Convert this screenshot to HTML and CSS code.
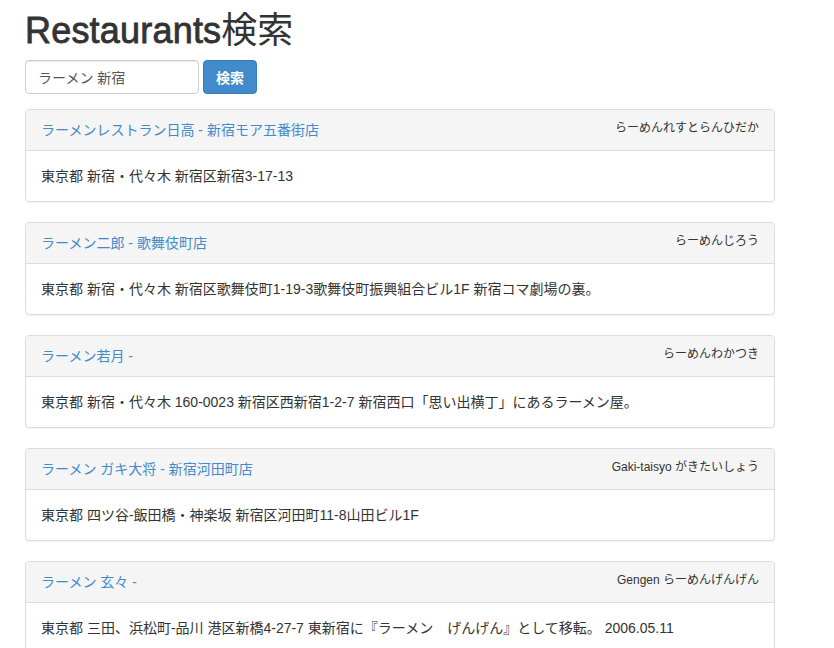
FILE: index.html
```html
<!DOCTYPE html>
<html lang="ja">
<head>
<meta charset="utf-8">
<title>Restaurants検索</title>
<link rel="stylesheet" href="styles.css">
</head>
<body>
<div class="container">
  <h1 class="title"><span class="title-latin">Restaurants</span>検索</h1>
  <form class="search">
    <input class="search-input" type="text" value="ラーメン 新宿">
    <button class="search-btn" type="button">検索</button>
  </form>

  <div class="panel">
    <div class="panel-heading">
      <a class="panel-title" href="#">ラーメンレストラン日高 - 新宿モア五番街店</a>
      <small class="kana">らーめんれすとらんひだか</small>
    </div>
    <div class="panel-body">東京都 新宿・代々木 新宿区新宿3-17-13</div>
  </div>

  <div class="panel">
    <div class="panel-heading">
      <a class="panel-title" href="#">ラーメン二郎 - 歌舞伎町店</a>
      <small class="kana">らーめんじろう</small>
    </div>
    <div class="panel-body">東京都 新宿・代々木 新宿区歌舞伎町1-19-3歌舞伎町振興組合ビル1F 新宿コマ劇場の裏。</div>
  </div>

  <div class="panel">
    <div class="panel-heading">
      <a class="panel-title" href="#">ラーメン若月 -</a>
      <small class="kana">らーめんわかつき</small>
    </div>
    <div class="panel-body">東京都 新宿・代々木 160-0023 新宿区西新宿1-2-7 新宿西口「思い出横丁」にあるラーメン屋。</div>
  </div>

  <div class="panel">
    <div class="panel-heading">
      <a class="panel-title" href="#">ラーメン ガキ大将 - 新宿河田町店</a>
      <small class="kana">Gaki-taisyo がきたいしょう</small>
    </div>
    <div class="panel-body">東京都 四ツ谷-飯田橋・神楽坂 新宿区河田町11-8山田ビル1F</div>
  </div>

  <div class="panel">
    <div class="panel-heading">
      <a class="panel-title" href="#">ラーメン 玄々 -</a>
      <small class="kana">Gengen らーめんげんげん</small>
    </div>
    <div class="panel-body">東京都 三田、浜松町-品川 港区新橋4-27-7 東新宿に『ラーメン　げんげん』として移転。 2006.05.11</div>
  </div>
</div>
</body>
</html>
```

FILE: styles.css
```css
* { box-sizing: border-box; }

body {
  margin: 0;
  background: #fff;
  color: #333;
  font-family: "Liberation Sans", "Noto Sans CJK JP", sans-serif;
  font-size: 14px;
  line-height: 20px;
}

.container {
  width: 750px;
  margin-left: 25px;
}

.title {
  margin: 11px 0 9px;
  font-size: 36px;
  line-height: 40px;
  font-weight: normal;
  color: #333;
}

.title-latin {
  letter-spacing: 0.2px;
  -webkit-text-stroke: 0.8px #333;
}

.search {
  display: flex;
  gap: 4px;
  margin: 0 0 15px;
}

.search-input {
  width: 174px;
  height: 34px;
  padding: 6px 12px;
  border: 1px solid #ccc;
  border-radius: 4px;
  font-family: inherit;
  font-size: 14px;
  color: #555;
  box-shadow: inset 0 1px 1px rgba(0,0,0,.075);
}

.search-btn {
  width: 54px;
  height: 34px;
  padding: 6px 12px;
  border: 1px solid #357ebd;
  border-radius: 4px;
  background: #428bca;
  color: #fff;
  font-family: inherit;
  font-size: 14px;
  font-weight: bold;
}

.panel {
  margin-bottom: 20px;
  border: 1px solid #ddd;
  border-radius: 4px;
  background: #fff;
  box-shadow: 0 1px 1px rgba(0,0,0,.05);
}

.panel-heading {
  display: flex;
  justify-content: space-between;
  align-items: center;
  padding: 10px 15px;
  background: #f5f5f5;
  border-bottom: 1px solid #ddd;
  border-radius: 3px 3px 0 0;
}

.panel-title {
  color: #428bca;
  text-decoration: none;
}

.kana {
  font-size: 12px;
  color: #333;
  position: relative;
  top: -2px;
}

.panel-body {
  padding: 15px;
}
```
